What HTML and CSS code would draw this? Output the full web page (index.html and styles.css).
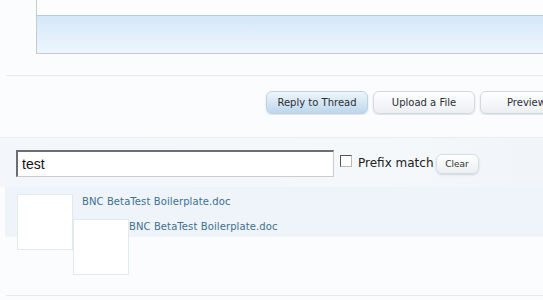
FILE: index.html
```html
<!DOCTYPE html>
<html>
<head>
<meta charset="utf-8">
<link rel="stylesheet" href="styles.css">
</head>
<body>
<div class="editor">
  <div class="editor-top"></div>
  <div class="editor-bar"></div>
</div>
<div class="rule rule-a"></div>
<div class="actions">
  <button class="btn btn-primary">Reply to Thread</button>
  <button class="btn">Upload a File</button>
  <button class="btn btn-cut">Preview</button>
</div>
<div class="search">
  <input class="search-input" type="text" value="test">
  <label class="prefix"><span class="check"></span>Prefix match</label>
  <button class="btn-small">Clear</button>
</div>
<div class="results">
  <div class="item">
    <div class="thumb"></div>
    <a class="file" href="#">BNC BetaTest Boilerplate.doc</a>
  </div>
  <div class="item">
    <div class="thumb"></div>
    <a class="file" href="#">BNC BetaTest Boilerplate.doc</a>
  </div>
</div>
<div class="rule rule-b"></div>
</body>
</html>
```
FILE: styles.css
```css
html, body {
  margin: 0;
  padding: 0;
  background: #fbfcfd;
  width: 543px;
  height: 300px;
  overflow: hidden;
  font-family: "DejaVu Sans", Verdana, sans-serif;
}
.editor {
  margin-left: 36px;
  width: 520px;
  border-left: 1px solid #c3ccd3;
}
.editor-top {
  height: 15px;
  background: #fdfdfe;
}
.editor-bar {
  height: 37px;
  border-top: 1px solid #bccbd8;
  border-bottom: 1px solid #c4ccd2;
  background: linear-gradient(#d4e8f9, #eef6fd);
}
.rule {
  height: 1px;
  background: #e6ebef;
  margin-left: 6px;
}
.rule-a {
  margin-top: 21px;
}
.actions {
  display: flex;
  gap: 5px;
  margin-top: 15px;
  padding-left: 266px;
  height: 24px;
  overflow: hidden;
  width: 277px;
}
.btn {
  flex: none;
  width: 102px;
  height: 23px;
  border: 1px solid #d2d8de;
  border-radius: 6px;
  background: linear-gradient(#ffffff, #eceff3);
  box-shadow: 0 1px 2px rgba(120, 140, 160, 0.25);
  font-family: "DejaVu Sans", Verdana, sans-serif;
  font-size: 10px;
  color: #2a2f35;
  padding: 0;
}
.btn-primary {
  background: linear-gradient(#eef5fb, #bdd7ec);
  border-color: #bfd0de;
}
.btn-cut {
  text-align: left;
  padding-left: 26px;
}
.search {
  margin-top: 22px;
  height: 49px;
  border-top: 1px solid #e7edf2;
  background: linear-gradient(90deg, #f3f7fb, #f4f8fb 70%, #f1f5f9);
  display: flex;
  align-items: center;
  padding-left: 16px;
  box-sizing: content-box;
}
.search-input {
  width: 318px;
  height: 27px;
  box-sizing: border-box;
  margin: 2px 0 0 0;
  border: 1px solid #c8cdd2;
  border-top: 2px solid #6b6f73;
  border-left: 2px solid #6b6f73;
  background: #fff;
  font-family: "Liberation Sans", Arial, sans-serif;
  font-size: 14px;
  padding: 0 0 0 4px;
  color: #111;
}
.prefix {
  display: flex;
  align-items: center;
  margin-left: 6px;
  font-size: 12px;
  color: #222;
}
.check {
  width: 10px;
  height: 10px;
  border: 1px solid #555;
  border-right-color: #bbb;
  border-bottom-color: #bbb;
  background: #fff;
  margin-right: 6px;
  margin-top: -3px;
}
.btn-small {
  margin-left: 2px;
  width: 43px;
  height: 20px;
  padding: 0;
  border: 1px solid #d8dde2;
  border-radius: 6px;
  background: linear-gradient(#ffffff, #eceff2);
  box-shadow: 0 1px 2px rgba(120, 140, 160, 0.3);
  font-family: "DejaVu Sans", Verdana, sans-serif;
  font-size: 9px;
  color: #333;
  margin-top: 2px;
}
.results {
  margin-left: 5px;
  height: 50px;
  background: #eef4fa;
  padding: 7px 0 0 12px;
  box-sizing: border-box;
  margin-bottom: 58px;
}
.item .thumb {
  float: left;
  width: 54px;
  height: 54px;
  border: 1px solid #e2e9ef;
  background: #fff;
}
.item {
  height: 25px;
}
.file {
  display: block;
  padding-left: 65px;
  padding-top: 2px;
  font-size: 10px;
  letter-spacing: 0.1px;
  color: #41708f;
  text-decoration: none;
}
.item + .item .file {
  padding-left: 9px;
}
.rule-b {
  margin-top: 0;
}
```
